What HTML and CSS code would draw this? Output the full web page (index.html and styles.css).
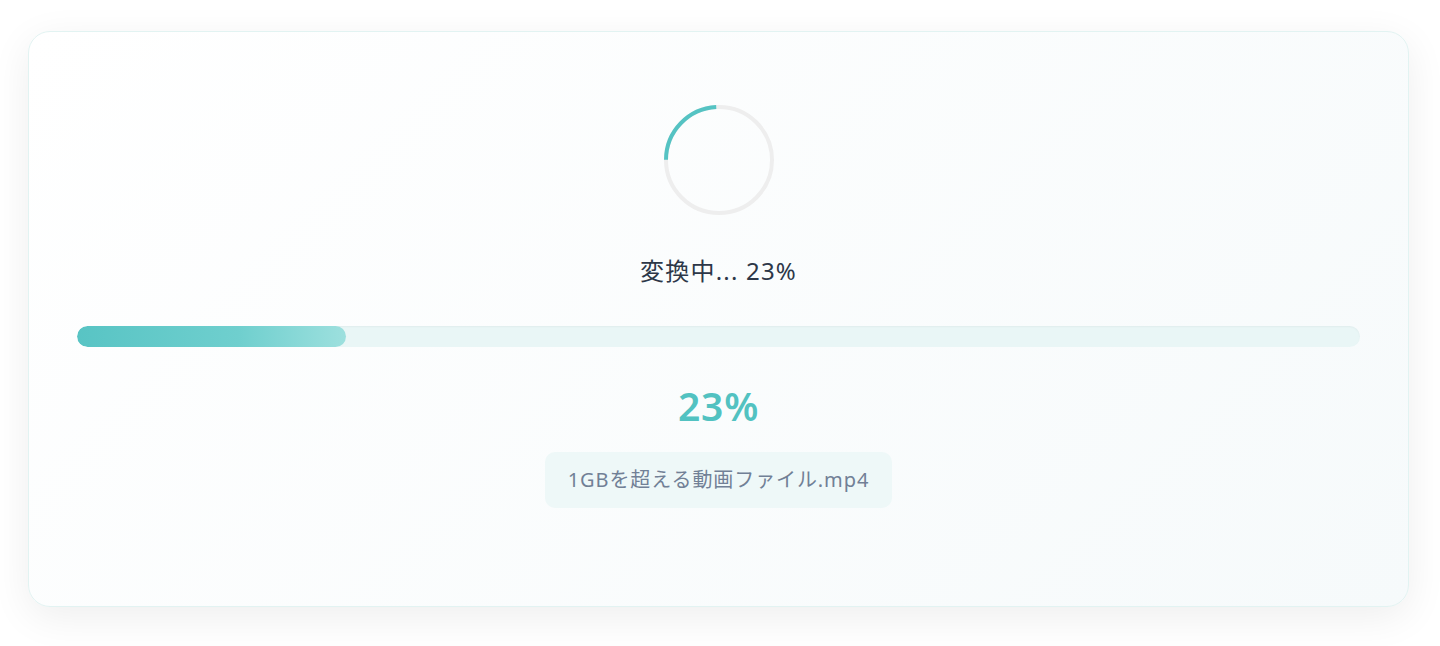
FILE: index.html
```html
<!DOCTYPE html>
<html lang="ja">
<head>
    <meta charset="UTF-8">
    <meta name="viewport" content="width=device-width, initial-scale=1.0">
    <title>変換中</title>
    <link rel="stylesheet" href="styles.css">
</head>
<body>
    <div class="card">
        <svg class="spinner" width="112" height="112" viewBox="0 0 112 112">
            <circle class="spinner-track" cx="56" cy="56" r="53"></circle>
            <circle class="spinner-arc" cx="56" cy="56" r="53"></circle>
        </svg>
        <div class="status">変換中... 23%</div>
        <div class="progress">
            <div class="progress-fill" style="width: 21%;"></div>
        </div>
        <div class="percent">23%</div>
        <div class="filename">1GBを超える動画ファイル.mp4</div>
    </div>
</body>
</html>
```

FILE: styles.css
```css
body {
    margin: 0;
    background: #ffffff;
    font-family: "Noto Sans", "Noto Sans CJK JP", sans-serif;
    padding: 31px 31px 40px 28px;
}
.card {
    background: linear-gradient(135deg, #ffffff, #f6fafb);
    border: 1px solid #e2f3f2;
    border-radius: 22px;
    box-shadow: 0 10px 40px rgba(0, 0, 0, 0.07);
    padding: 72px 48px 98px;
    display: flex;
    flex-direction: column;
    align-items: center;
}
.spinner {
    display: block;
}
.spinner-track {
    fill: none;
    stroke: #eeeeee;
    stroke-width: 4;
}
.spinner-arc {
    fill: none;
    stroke: #55c3c3;
    stroke-width: 4;
    stroke-dasharray: 80 400;
    transform: rotate(-93deg) scale(1, -1);
    transform-origin: 56px 56px;
}
.status {
    margin-top: 38px;
    font-size: 24px;
    line-height: 33px;
    letter-spacing: 0.05em;
    color: #2d3748;
}
.progress {
    align-self: stretch;
    margin-top: 39px;
    height: 21px;
    border-radius: 11px;
    background: #e9f6f6;
    box-shadow: inset 0 1px 2px rgba(0, 0, 0, 0.04);
    overflow: hidden;
}
.progress-fill {
    height: 100%;
    border-radius: 11px;
    background: linear-gradient(90deg, #58c4c4, #6fcfce 60%, #9de0de);
}
.percent {
    margin-top: 34px;
    font-size: 39px;
    line-height: 50px;
    font-weight: 600;
    letter-spacing: 0.02em;
    color: #52c2c1;
}
.filename {
    margin-top: 21px;
    padding: 0 23px;
    height: 56px;
    line-height: 56px;
    border-radius: 10px;
    background: #eef8f8;
    color: #718096;
    font-size: 20px;
    letter-spacing: 0.045em;
}
```
